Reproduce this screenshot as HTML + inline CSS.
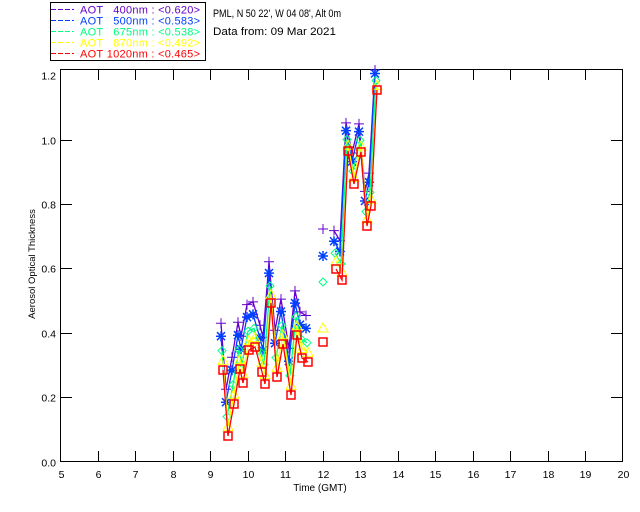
<!DOCTYPE html>
<html><head><meta charset="utf-8"><style>
html,body{margin:0;padding:0;background:#fff;width:640px;height:512px;overflow:hidden}
svg{display:block}
text{font-family:"Liberation Sans",sans-serif;font-size:11px}
</style></head><body>
<svg id="s" width="640" height="512" xmlns="http://www.w3.org/2000/svg">
<rect x="50.5" y="2.5" width="155" height="58" fill="none" stroke="#000" stroke-width="1"/>
<g stroke-width="1" stroke-dasharray="5,2">
<line x1="51" y1="9.5" x2="74" y2="9.5" stroke="#6600cc"/>
<line x1="51" y1="20.5" x2="74" y2="20.5" stroke="#0040ff"/>
<line x1="51" y1="31.5" x2="74" y2="31.5" stroke="#00ff80"/>
<line x1="51" y1="42.5" x2="74" y2="42.5" stroke="#ffff00"/>
<line x1="51" y1="53.5" x2="74" y2="53.5" stroke="#ff0000"/>
</g>
<text x="80" y="13.5" fill="#6600cc" textLength="120">AOT&#160;&#160;&#160;400nm&#160;:&#160;&lt;0.620&gt;</text>
<text x="80" y="24.5" fill="#0040ff" textLength="120">AOT&#160;&#160;&#160;500nm&#160;:&#160;&lt;0.583&gt;</text>
<text x="80" y="35.5" fill="#00ff80" textLength="120">AOT&#160;&#160;&#160;675nm&#160;:&#160;&lt;0.538&gt;</text>
<text x="80" y="46.5" fill="#ffff00" textLength="120">AOT&#160;&#160;&#160;870nm&#160;:&#160;&lt;0.492&gt;</text>
<text x="80" y="57.5" fill="#ff0000" textLength="120">AOT&#160;1020nm&#160;:&#160;&lt;0.465&gt;</text>
<text x="213" y="17" fill="#000" textLength="128" lengthAdjust="spacingAndGlyphs">PML, N 50 22', W 04 08', Alt 0m</text>
<text x="213" y="35" fill="#000" textLength="123" lengthAdjust="spacingAndGlyphs">Data from: 09 Mar 2021</text>
<rect x="60.5" y="69.5" width="562" height="392" fill="none" stroke="#000"/>
<g id="ax" stroke="#000"></g>
<g id="lab" fill="#000"></g>
<text x="0" y="0" transform="translate(35,264) rotate(-90)" text-anchor="middle" style="font-size:9.5px">Aerosol Optical Thickness</text>
<text x="320" y="491" text-anchor="middle" style="font-size:10px">Time (GMT)</text>
<g id="data"></g>
</svg>
<script>
var NS="http://www.w3.org/2000/svg";
function el(p,t,a,txt){var e=document.createElementNS(NS,t);for(var k in a)e.setAttribute(k,a[k]);if(txt!==undefined)e.textContent=txt;p.appendChild(e);return e;}
var ax=document.getElementById('ax'),lab=document.getElementById('lab'),dg=document.getElementById('data');
function X(h){return 60.5+37.47*(h-5);}
function Y(v){return 461.5-322*v;}
for(var h=5;h<=20;h++){var x=Math.round(X(h))+0.5;
 if(h>5&&h<20){el(ax,'line',{x1:x,y1:461,x2:x,y2:451});el(ax,'line',{x1:x,y1:70,x2:x,y2:80});}
 el(lab,'text',{x:x,y:478,'text-anchor':'middle',style:'font-size:10.5px'},String(h));}
for(var i=0;i<=6;i++){var v=i*0.2,y=Math.round(Y(v))+0.5;
 if(i>0&&i<6){el(ax,'line',{x1:61,y1:y,x2:72,y2:y});el(ax,'line',{x1:622,y1:y,x2:611,y2:y});}
 el(lab,'text',{x:56,y:y+4,'text-anchor':'end',style:'font-size:10.5px'},v.toFixed(1));}
var seg1=[[223,370],[228,436],[234,404],[240,369],[243,383],[249,350],[255,347],[262,372],[265,384],[271,303],[277,377],[283,344],[291,395],[297,335],[302,358],[308,362]];
var seg2=[[336,269],[342,280],[348,151],[354,184],[361,152],[367,226],[371,206],[377,90]];
var isoY=[229,256,282,328,342];
var series=[
 {c:'#6600cc',off:0.145,m:'plus',dx:0},
 {c:'#0040ff',off:0.105,m:'star',dx:0},
 {c:'#00ff80',off:0.06,m:'dia',dx:1},
 {c:'#ffff00',off:0.03,m:'tri',dx:2},
 {c:'#ff0000',off:0,m:'sq',dx:2}];
function tr(p,off,dx){var v=(461.5-p[1])/322;var nv=v+off*(1-Math.max(0,v-0.3)*0.6);var y=461.5-322*nv;if(y<70)y=70;return [p[0]+dx-2,y];}
function marker(g,m,x,y,c){
 if(m=='plus'){el(g,'path',{d:'M'+(x-5)+' '+y+'H'+(x+5)+'M'+x+' '+(y-5)+'V'+(y+5),stroke:c,fill:'none'});}
 else if(m=='star'){el(g,'path',{d:'M'+(x-5)+' '+y+'H'+(x+5)+'M'+x+' '+(y-5)+'V'+(y+5)+'M'+(x-4)+' '+(y-4)+'L'+(x+4)+' '+(y+4)+'M'+(x-4)+' '+(y+4)+'L'+(x+4)+' '+(y-4),stroke:c,fill:'none','stroke-width':1.5});}
 else if(m=='dia'){el(g,'path',{d:'M'+x+' '+(y-4)+'L'+(x+4)+' '+y+'L'+x+' '+(y+4)+'L'+(x-4)+' '+y+'Z',stroke:c,fill:'none'});}
 else if(m=='tri'){el(g,'path',{d:'M'+x+' '+(y-5)+'L'+(x+5)+' '+(y+4)+'L'+(x-5)+' '+(y+4)+'Z',stroke:c,fill:'none'});}
 else {el(g,'rect',{x:x-4,y:y-4,width:8,height:8,stroke:c,fill:'none','stroke-width':1.5});}
}
series.forEach(function(s,si){
 var g=el(dg,'g',{});
 [seg1,seg2].forEach(function(seg){
  var pts=seg.map(function(p){return tr(p,s.off,s.dx);});
  el(g,'polyline',{points:pts.map(function(p){return p.join(',');}).join(' '),fill:'none',stroke:s.c,'stroke-width':1.3});
  pts.forEach(function(p){marker(g,s.m,p[0],p[1],s.c);});
 });
 marker(g,s.m,323,isoY[si],s.c);
});
</script>
</body></html>
